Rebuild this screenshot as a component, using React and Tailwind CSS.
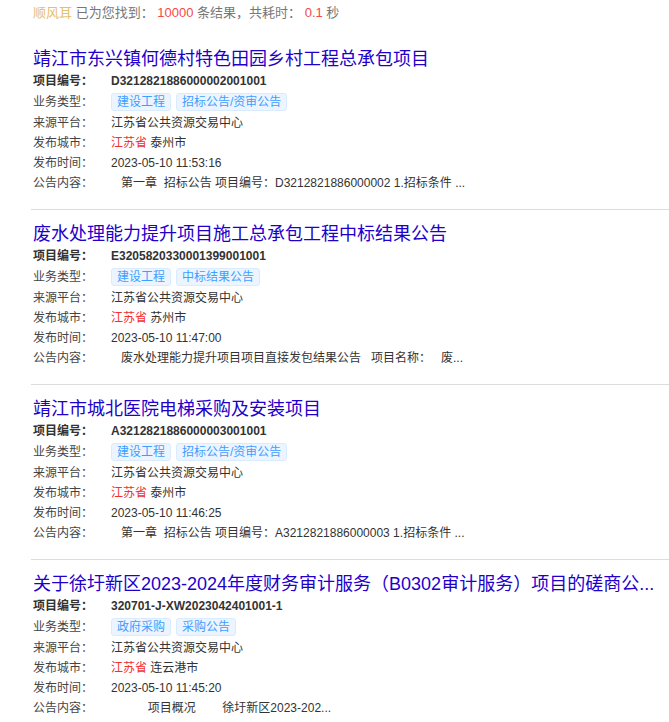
import React from 'react';

const results = [
    {
        title: '靖江市东兴镇何德村特色田园乡村工程总承包项目',
        code: 'D3212821886000002001001',
        tags: ['建设工程', '招标公告/资审公告'],
        platform: '江苏省公共资源交易中心',
        province: '江苏省',
        city: '泰州市',
        time: '2023-05-10 11:53:16',
        content: '   第一章  招标公告 项目编号：D3212821886000002 1.招标条件 ...',
    },
    {
        title: '废水处理能力提升项目施工总承包工程中标结果公告',
        code: 'E3205820330001399001001',
        tags: ['建设工程', '中标结果公告'],
        platform: '江苏省公共资源交易中心',
        province: '江苏省',
        city: '苏州市',
        time: '2023-05-10 11:47:00',
        content: '   废水处理能力提升项目项目直接发包结果公告   项目名称：   废...',
    },
    {
        title: '靖江市城北医院电梯采购及安装项目',
        code: 'A3212821886000003001001',
        tags: ['建设工程', '招标公告/资审公告'],
        platform: '江苏省公共资源交易中心',
        province: '江苏省',
        city: '泰州市',
        time: '2023-05-10 11:46:25',
        content: '   第一章  招标公告 项目编号：A3212821886000003 1.招标条件 ...',
    },
    {
        title: '关于徐圩新区2023-2024年度财务审计服务（B0302审计服务）项目的磋商公...',
        code: '320701-J-XW2023042401001-1',
        tags: ['政府采购', '采购公告'],
        platform: '江苏省公共资源交易中心',
        province: '江苏省',
        city: '连云港市',
        time: '2023-05-10 11:45:20',
        content: '           项目概况        徐圩新区2023-202...',
    },
];

const Row = ({ label, bold, children, tall }) => (
    <div className={`flex items-center ${tall ? 'h-[22px]' : 'h-[20px]'}`}>
        <div className={`w-[78px] shrink-0 ${bold ? 'font-bold text-[#333]' : 'text-[#444]'}`}>{label}</div>
        <div className="text-[#333] whitespace-pre">{children}</div>
    </div>
);

const ResultCard = ({ item, first }) => (
    <div>
        {!first && <div className="ml-[31px] h-px bg-[#dcdcdc] mt-[16px] mb-[12px]"></div>}
        <div className="pl-[33px] pr-[9px]">
            <div className="h-[24px] leading-[24px] text-[18px] text-[#2200cc] truncate">{item.title}</div>
            <div className="text-[12px] leading-[20px]">
                <Row label="项目编号：" bold>
                    <span className="font-bold">{item.code}</span>
                </Row>
                <Row label="业务类型：" tall>
                    <div className="flex items-center gap-[5px]">
                        {item.tags.map((tag) => (
                            <span
                                key={tag}
                                className="h-[18px] px-[5px] leading-[16px] rounded-[3px] border border-[#d9ecff] bg-[#ecf5ff] text-[#409eff]"
                            >
                                {tag}
                            </span>
                        ))}
                    </div>
                </Row>
                <Row label="来源平台：">{item.platform}</Row>
                <Row label="发布城市：">
                    <span className="text-[#f23030]">{item.province}</span>
                    {' ' + item.city}
                </Row>
                <Row label="发布时间：">{item.time}</Row>
                <Row label="公告内容：">{item.content}</Row>
            </div>
        </div>
    </div>
);

const App = () => {
    return (
        <div
            className="w-[669px] min-h-[722px] bg-white"
            style={{ fontFamily: '"Liberation Sans", "Noto Sans CJK SC", sans-serif' }}
        >
            {/* summary line */}
            <div className="pl-[33px] h-[26px] leading-[26px] text-[13px] text-[#777]">
                <span className="text-[#e6c06a]">顺风耳</span> 已为您找到：{' '}
                <span className="text-[#f44a4a]">10000</span> 条结果，共耗时：{' '}
                <span className="text-[#f44a4a]">0.1</span> 秒
            </div>

            <div className="mt-[21px]">
                {results.map((item, i) => (
                    <ResultCard key={item.code} item={item} first={i === 0} />
                ))}
            </div>
        </div>
    );
};

export default App;
